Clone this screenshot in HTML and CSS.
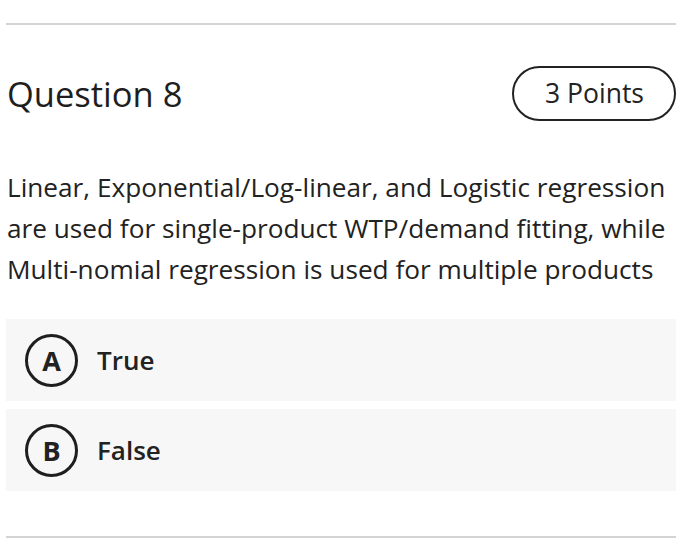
FILE: index.html
```html
<!DOCTYPE html>
<html>
<head>
<meta charset="utf-8">
<link rel="stylesheet" href="styles.css">
</head>
<body>
<div class="page">
  <hr class="rule top">
  <div class="header">
    <h2 class="title">Question 8</h2>
    <span class="points">3 Points</span>
  </div>
  <p class="question">Linear, Exponential/Log-linear, and Logistic regression are used for single-product WTP/demand fitting, while Multi-nomial regression is used for multiple products</p>
  <div class="options">
    <div class="option"><span class="letter">A</span><span class="label">True</span></div>
    <div class="option"><span class="letter">B</span><span class="label">False</span></div>
  </div>
  <hr class="rule bottom">
</div>
</body>
</html>
```

FILE: styles.css
```css
html, body {
  margin: 0;
  padding: 0;
  background: #fff;
}
body {
  font-family: "Open Sans", "Liberation Sans", sans-serif;
  color: #222;
}
.page {
  width: 670px;
  margin-left: 6px;
  padding-top: 23px;
}
.rule {
  border: none;
  height: 2px;
  background: #d4d4d4;
  margin: 0;
}
.header {
  display: flex;
  justify-content: space-between;
  align-items: center;
  margin-top: 40px;
  height: 56px;
}
.title {
  margin: 0 0 0 1px;
  font-size: 34.5px;
  font-weight: 400;
  color: #1e1e1e;
}
.points {
  box-sizing: border-box;
  height: 55px;
  padding: 0 30px 0 31px;
  border: 2px solid #222;
  border-radius: 28px;
  display: flex;
  align-items: center;
  font-size: 26.5px;
  font-weight: 500;
}
.question {
  margin: 46px 0 0 1px;
  font-size: 26.2px;
  line-height: 41px;
  color: #222;
}
.options {
  margin-top: 29px;
  display: flex;
  flex-direction: column;
  gap: 8px;
}
.option {
  height: 82px;
  background: #f7f7f7;
  display: flex;
  align-items: center;
  padding-left: 19px;
}
.letter {
  box-sizing: border-box;
  width: 53px;
  height: 53px;
  border: 3px solid #1e1e1e;
  border-radius: 50%;
  display: flex;
  align-items: center;
  justify-content: center;
  font-size: 27px;
  font-weight: 700;
}
.label {
  margin-left: 19px;
  font-size: 26px;
  font-weight: 600;
}
.bottom {
  margin-top: 45px;
}
```
